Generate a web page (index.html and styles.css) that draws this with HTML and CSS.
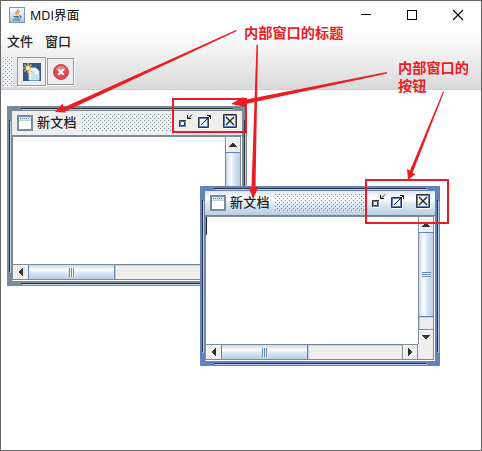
FILE: index.html
```html
<!DOCTYPE html>
<html lang="zh-CN">
<head>
<meta charset="utf-8">
<title>MDI界面</title>
<link rel="stylesheet" href="styles.css">
</head>
<body>
<svg class="defs" width="0" height="0" aria-hidden="true">
  <defs>
    <symbol id="doc" viewBox="0 0 16 16">
      <rect x="1" y="1" width="14" height="14" fill="#fff" stroke="#7a8a99" stroke-width="2"/>
      <path d="M2 2H14V5H2z" fill="#d9e5f2"/>
      <path d="M3 3.500H13" stroke="#6382bf" stroke-dasharray="1 1"/>
      <path d="M2 5.500H14" stroke="#b8cfe5"/>
    </symbol>
    <symbol id="iconify" viewBox="0 0 16 16">
      <path d="M1 13.500H7.500V7" fill="none" stroke="#fff"/>
      <rect x="1" y="7" width="6" height="6" fill="#6382bf"/>
      <rect x="2" y="8" width="3" height="3" fill="#fff"/>
      <path d="M.500 13V6.500H7" fill="none" stroke="#333"/>
      <path d="M2 11.500H5.500V8" fill="none" stroke="#333"/>
      <path d="M13 .500L9 4.500M8.500 1V4.500H12" fill="none" stroke="#111"/>
    </symbol>
    <symbol id="maximize" viewBox="0 0 16 16">
      <path d="M1 14.500H11.500V4" fill="none" stroke="#fff"/>
      <rect x="1.500" y="4.500" width="8" height="8" fill="#eef4fa" stroke="#6382bf"/>
      <path d="M.500 3.500H10.500V13.500H.500z" fill="none" stroke="#333"/>
      <path d="M3 11L12 2M9 1.500H12.500V5" fill="none" stroke="#111"/>
    </symbol>
    <symbol id="close" viewBox="0 0 16 16">
      <path d="M1 14.500H14.500V1" fill="none" stroke="#fff"/>
      <rect x="1.500" y="1.500" width="11" height="11" fill="#eaf1f8" stroke="#6382bf"/>
      <path d="M.500 .500H13.500V13.500H.500z" fill="none" stroke="#333"/>
      <path d="M3 3L11 11M11 3L3 11" stroke="#222" stroke-width="1.300"/>
    </symbol>
    <symbol id="arrow" viewBox="0 0 8 4">
      <path d="M3 0H5V1H6V2H7V3H8V4H0V3H1V2H2V1H3z" fill="#333"/>
    </symbol>
  </defs>
</svg>
<div class="window">
  <header class="caption">
    <svg class="java" viewBox="0 0 16 16">
      <defs><linearGradient id="jg" x2="0" y2="1"><stop stop-color="#fff"/><stop offset="1" stop-color="#a9c6dd"/></linearGradient></defs>
      <rect x=".500" y=".500" width="15" height="15" fill="url(#jg)" stroke="#7895ae"/>
      <path d="M9 2Q9 4 7.500 5T8 8M11 4Q8 5 9.500 7" fill="none" stroke="#e8862c" stroke-width="1.200"/>
      <path d="M4.500 9.500H10M5.500 11H10M3.500 13H11.500M10.500 9Q13 8.500 12 10.500L10.500 11" fill="none" stroke="#426c8e"/>
    </svg>
    <h1>MDI界面</h1>
    <div class="controls">
      <svg viewBox="0 0 12 12"><path d="M1 5.500H11" stroke="#000"/></svg>
      <svg viewBox="0 0 12 12"><rect x="1.500" y="1.500" width="9" height="9" fill="none" stroke="#000"/></svg>
      <svg viewBox="0 0 12 12"><path d="M1 1L11 11M11 1L1 11" stroke="#000" stroke-width="1.100"/></svg>
    </div>
  </header>
  <div class="bars">
    <nav class="menu"><span>文件</span><span>窗口</span></nav>
    <div class="toolbar">
      <i class="grip"></i>
      <button class="new"><svg width="18" height="18" viewBox="0 0 18 18">
        <rect width="18" height="18" fill="#34567f"/>
        <path d="M6 5H13L16 8V17H6z" fill="#e9f7fb" stroke="#b8dcea"/>
        <path d="M8 8H12V11H15V16H8z" fill="#c1e3ef"/>
        <path d="M5 0V10M0 5H10M1.500 1.500L8.500 8.500M8.500 1.500L1.500 8.500" stroke="#f3c64a" stroke-width="1.200"/>
        <circle cx="5" cy="5" r="1.700" fill="#fff"/>
      </svg></button>
      <button class="del"><svg width="16" height="16" viewBox="0 0 16 16">
        <circle cx="8" cy="8" r="7.500" fill="#df4850" stroke="#b94850"/>
        <path d="M3 6Q4 2 8 2T13 6Q8 8 3 6" fill="#ed8585"/>
        <path d="M5.300 5.300L10.700 10.700M10.700 5.300L5.300 10.700" stroke="#fff" stroke-width="2.200"/>
      </svg></button>
    </div>
  </div>
  <main class="desktop">
    <section class="frame first">
      <i class="edge top"></i><i class="edge bottom"></i><i class="edge left"></i><i class="edge right"></i>
      <div class="title"><svg class="doc"><use href="#doc"/></svg><h2>新文档</h2><i class="bumps"></i><svg class="b1"><use href="#iconify"/></svg><svg class="b2"><use href="#maximize"/></svg><svg class="b3"><use href="#close"/></svg></div>
      <div class="scroll">
        <div class="text"></div>
        <div class="vbar"><div class="btn"><svg><use href="#arrow"/></svg></div><div class="thumb"><i></i></div><div class="track"></div><div class="btn down"><svg><use href="#arrow"/></svg></div></div>
        <div class="hbar"><div class="btn"><svg><use href="#arrow"/></svg></div><div class="thumb"><i></i></div><div class="track"></div><div class="btn rt"><svg><use href="#arrow"/></svg></div></div>
        <div class="corner"></div>
      </div>
    </section>
    <section class="frame second">
      <i class="edge top"></i><i class="edge bottom"></i><i class="edge left"></i><i class="edge right"></i>
      <div class="title"><svg class="doc"><use href="#doc"/></svg><h2>新文档</h2><i class="bumps"></i><svg class="b1"><use href="#iconify"/></svg><svg class="b2"><use href="#maximize"/></svg><svg class="b3"><use href="#close"/></svg></div>
      <div class="scroll">
        <div class="text"><i class="caret"></i></div>
        <div class="vbar"><div class="btn"><svg><use href="#arrow"/></svg></div><div class="thumb"><i></i></div><div class="track"></div><div class="btn down"><svg><use href="#arrow"/></svg></div></div>
        <div class="hbar"><div class="btn"><svg><use href="#arrow"/></svg></div><div class="thumb"><i></i></div><div class="track"></div><div class="btn rt"><svg><use href="#arrow"/></svg></div></div>
        <div class="corner"></div>
      </div>
    </section>
  </main>
  <svg class="marks" viewBox="0 0 482 451">
    <g fill="#ed1c24">
      <path d="M236 30L237 31L65 111.500L66 112.500L55 112L62.500 103.500L63.500 107.500z"/>
      <path d="M256.500 45H258L255.500 187H258.500L253 199L248.500 187H251.500z"/>
      <path d="M387 72V73.500L245.500 104L246 107L231 104L243 97L243.500 100z"/>
      <path d="M443 91.500L444 92L412.500 173L415.500 174L408 180L407 169L410 170.500z"/>
    </g>
    <g fill="none" stroke="#ed1c24" stroke-width="2">
      <rect x="173" y="99" width="73" height="33"/>
      <rect x="366" y="180" width="82" height="43"/>
    </g>
  </svg>
  <p class="note n1">内部窗口的标题</p>
  <p class="note n2">内部窗口的<br>按钮</p>
</div>
</body>
</html>
```
FILE: styles.css
```css
* { box-sizing: border-box; }
body { margin: 0; background: #fff; font-family: "Liberation Sans", "Noto Sans CJK SC", sans-serif; color: #222; }
svg { display: block; flex: none; }
h1, h2, p { margin: 0; font-weight: 400; }
.defs { position: absolute; }
.window { position: relative; width: 482px; height: 451px; border: 1px solid #666; overflow: hidden; display: flex; flex-direction: column; }
.caption { height: 29px; display: flex; align-items: center; padding: 0 14px 0 8px; }
.java { width: 16px; height: 16px; margin-top: -1px; }
.caption h1 { font: 12.5px/28px "Open Sans", "Noto Sans CJK SC", sans-serif; color: #000; margin-left: 5px; letter-spacing: .1px; }
.controls { margin-left: auto; display: flex; gap: 34px; padding-right: 3px; margin-top: -1px; }
.controls svg { width: 12px; height: 12px; }
.bars { height: 60px; background: linear-gradient(#fff, #dadada); border-bottom: 1px solid #ccc; }
.menu { height: 25px; display: flex; gap: 12px; padding-left: 6px; font: 500 13px/22px "Noto Sans CJK SC", sans-serif; }
.toolbar { display: flex; padding: 2px 0 0 2px; }
.grip { width: 10px; height: 30px; margin-right: 4px; --dot: #8294a5; background: #fff8 conic-gradient(from 270deg at 1px 1px, var(--dot) 90deg, transparent 0) 0 0 / 4px 4px; background: conic-gradient(from 270deg at 1px 1px, var(--dot) 90deg, transparent 0) 0 0 / 4px 4px, conic-gradient(from 270deg at 1px 1px, var(--dot) 90deg, transparent 0) 2px 2px / 4px 4px, #eef2f6; }
.toolbar button { height: 29px; width: 29px; padding: 0; border: 1px solid #999; background: #eee; display: flex; align-items: center; justify-content: center; box-shadow: 1px 1px #fff; }
.toolbar .del { width: 27px; height: 27px; margin: 1px 0 0 1px; }
.desktop { position: relative; flex: 1; }
.frame { --edge: #7a8a99; --line: #7a8a99; --shine: #b8cfe5; --dot: #7a8a99; position: absolute; width: 240px; height: 180px; padding: 5px; background: var(--edge); display: flex; flex-direction: column; }
.first { left: 6px; top: 16px; }
.second { --edge: #6382bf; --dot: #6382bf; left: 199px; top: 96px; }
.edge { position: absolute; background: #333; box-shadow: 1px 1px var(--shine); }
.edge.top, .edge.bottom { left: 14px; right: 14px; height: 1px; }
.edge.left, .edge.right { top: 14px; bottom: 14px; width: 1px; }
.edge.top { top: 2px; }
.edge.bottom { bottom: 2px; }
.edge.left { left: 2px; }
.edge.right { right: 2px; }
.title { position: relative; height: 25px; display: flex; align-items: center; padding: 0 3px 0 5px; background: #eee; border-bottom: 1px solid var(--edge); }
.second .title { background: linear-gradient(#dce8f3, #fff 30%, #dce8f3 55%, #b8cfe5); }
.title svg { width: 16px; height: 16px; }
.title h2 { font: 500 13px/23px "Noto Sans CJK SC", sans-serif; margin: -3px 0 0 4px; letter-spacing: .3px; }
.bumps { height: 18px; flex: 1; margin: 0 5px 0 5px; background: conic-gradient(from 270deg at 1px 1px, var(--dot) 90deg, transparent 0) 0 0 / 4px 4px, conic-gradient(from 270deg at 1px 1px, var(--dot) 90deg, transparent 0) 2px 2px / 4px 4px, conic-gradient(from 270deg at 1px 1px, #fff 90deg, transparent 0) 1px 1px / 4px 4px, conic-gradient(from 270deg at 1px 1px, #fff 90deg, transparent 0) 3px 3px / 4px 4px; }
.title .b1, .title .b2, .title .b3 { margin-top: -2px; }
.title .b2 { margin-left: 3px; }
.title .b3 { margin-left: 9px; }
.scroll { flex: 1; display: grid; grid-template: 127px 16px / 212px 16px; border: 1px solid var(--line); border-right: 1px solid #fff; border-bottom: 1px solid #fff; background: #fff; }
.caret { display: block; width: 1px; height: 18px; background: #222; }
.vbar { display: flex; flex-direction: column; border: solid var(--line); border-width: 0 1px; background: #eee; }
.hbar { display: flex; border: solid var(--line); border-width: 1px 0; background: #eee; }
.corner { border: solid var(--line); border-width: 0 1px 1px 0; background: #eee; }
.btn { flex: none; display: flex; align-items: center; justify-content: center; box-shadow: inset 1px 1px #fff; }
.btn svg { width: 8px; height: 4px; }
.vbar .btn { height: 15px; }
.hbar .btn { width: 15px; }
.vbar .down { border-top: 1px solid var(--line); }
.hbar .rt { border: solid var(--line); border-width: 0 1px; width: 16px; }
.down svg { transform: rotate(180deg); }
.hbar .btn svg { transform: rotate(-90deg); }
.hbar .rt svg { transform: rotate(90deg); }
.thumb { flex: none; display: flex; align-items: center; justify-content: center; }
.vbar .thumb { height: 85px; border: solid #6382bf; border-width: 1px 0; background: linear-gradient(90deg, #c8daeb, #dce8f3 15%, #fff 35%, #dce8f3 55%, #b8cfe5); }
.hbar .thumb { width: 87px; border: solid #6382bf; border-width: 0 1px; background: linear-gradient(#c8daeb, #dce8f3 15%, #fff 35%, #dce8f3 55%, #b8cfe5); }
.thumb i { background: repeating-linear-gradient(#6382bf 0 1px, #fff 1px 2px); width: 9px; height: 6px; }
.hbar .thumb i { width: 6px; height: 9px; background: repeating-linear-gradient(90deg, #6382bf 0 1px, #fff 1px 2px); }
.track { flex: 1; box-shadow: inset 1px 1px #b8cfe5; }
.marks { position: absolute; left: -1px; top: -1px; width: 482px; height: 451px; }
.note { position: absolute; color: #ed1c24; font: 700 14.2px/18px "Noto Sans CJK SC", sans-serif; white-space: nowrap; }
.n1 { left: 243px; top: 22px; }
.n2 { left: 397px; top: 57px; }
```
